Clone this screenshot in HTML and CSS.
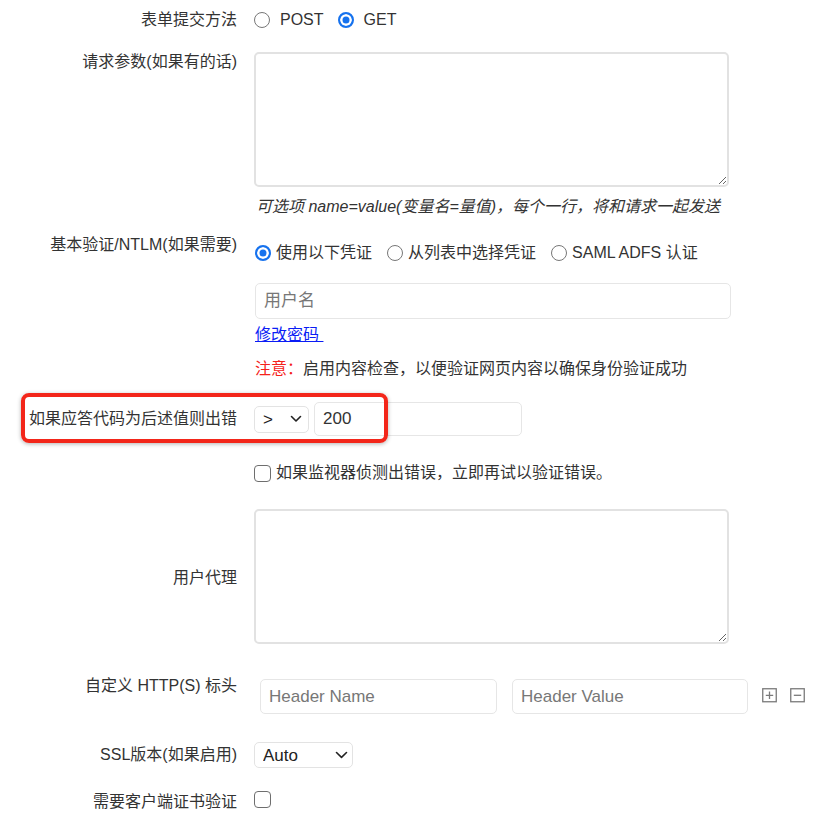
FILE: index.html
```html
<!DOCTYPE html>
<html lang="zh-CN">
<head>
<meta charset="utf-8">
<title>监视器设置</title>
<link rel="stylesheet" href="styles.css">
</head>
<body>
<form class="form">
  <div class="row r-method">
    <div class="label">表单提交方法</div>
    <div class="control radios wide-gap">
      <label class="opt"><input type="radio" name="method"><span>POST</span></label>
      <label class="opt"><input type="radio" name="method" checked><span>GET</span></label>
    </div>
  </div>

  <div class="row r-params">
    <div class="label">请求参数(如果有的话)</div>
    <div class="control">
      <textarea class="textarea"></textarea>
      <div class="help">可选项 name=value(变量名=量值)，每个一行，将和请求一起发送</div>
    </div>
  </div>

  <div class="row r-auth">
    <div class="label">基本验证/NTLM(如果需要)</div>
    <div class="control">
      <div class="radios narrow-gap auth-radios">
        <label class="opt"><input type="radio" name="auth" checked><span>使用以下凭证</span></label>
        <label class="opt"><input type="radio" name="auth"><span>从列表中选择凭证</span></label>
        <label class="opt"><input type="radio" name="auth"><span>SAML ADFS 认证</span></label>
      </div>
      <input class="input user" type="text" placeholder="用户名">
      <div class="link-line"><a href="#" class="link">修改密码 </a></div>
      <div class="note"><span class="warn">注意：</span>启用内容检查，以便验证网页内容以确保身份验证成功</div>
    </div>
  </div>

  <div class="row r-code">
    <div class="label">如果应答代码为后述值则出错</div>
    <div class="control inline">
      <div class="select-wrap op">
        <select class="select"><option>&gt;</option></select>
        <svg class="chev" width="12" height="8" viewBox="0 0 12 8"><path d="M1.5 1.5 L6 6 L10.5 1.5" fill="none" stroke="#222" stroke-width="1.6" stroke-linecap="round" stroke-linejoin="round"/></svg>
      </div>
      <input class="input code" type="text" value="200">
    </div>
    <div class="highlight"></div>
  </div>

  <div class="row r-retry">
    <div class="label"></div>
    <div class="control">
      <label class="opt check-opt"><input type="checkbox" class="checkbox"><span>如果监视器侦测出错误，立即再试以验证错误。</span></label>
    </div>
  </div>

  <div class="row r-agent">
    <div class="label">用户代理</div>
    <div class="control">
      <textarea class="textarea"></textarea>
    </div>
  </div>

  <div class="row r-headers">
    <div class="label">自定义 HTTP(S) 标头</div>
    <div class="control headers">
      <input class="input hname" type="text" placeholder="Header Name">
      <input class="input hvalue" type="text" placeholder="Header Value">
      <span class="icon-btn" title="添加">
        <svg width="15" height="15" viewBox="0 0 15 15"><rect x="0.75" y="0.75" width="13.5" height="13" fill="none" stroke="#7a7a7a" stroke-width="1.3"/><path d="M7.5 3.5 V11 M3.8 7.3 H11.2" stroke="#7a7a7a" stroke-width="1.3"/></svg>
      </span>
      <span class="icon-btn" title="删除">
        <svg width="15" height="15" viewBox="0 0 15 15"><rect x="0.75" y="0.75" width="13.5" height="13" fill="none" stroke="#7a7a7a" stroke-width="1.3"/><path d="M3.8 7.3 H11.2" stroke="#7a7a7a" stroke-width="1.3"/></svg>
      </span>
    </div>
  </div>

  <div class="row r-ssl">
    <div class="label">SSL版本(如果启用)</div>
    <div class="control">
      <div class="select-wrap ssl">
        <select class="select"><option>Auto</option></select>
        <svg class="chev" width="13" height="8" viewBox="0 0 13 8"><path d="M1.5 1.5 L6.5 6.3 L11.5 1.5" fill="none" stroke="#222" stroke-width="1.6" stroke-linecap="round" stroke-linejoin="round"/></svg>
      </div>
    </div>
  </div>

  <div class="row r-cert">
    <div class="label">需要客户端证书验证</div>
    <div class="control">
      <input type="checkbox" class="checkbox">
    </div>
  </div>
</form>
</body>
</html>
```

FILE: styles.css
```css
* { box-sizing: border-box; }

html, body {
  margin: 0;
  padding: 0;
  background: #ffffff;
}

body {
  font-family: "Liberation Sans", "Noto Sans CJK SC", sans-serif;
  font-size: 16px;
  line-height: 20px;
  color: #333333;
}

.form {
  padding-top: 10px;
}

.row {
  display: flex;
  align-items: flex-start;
  position: relative;
}

.label {
  width: 237px;
  flex: none;
  text-align: right;
  color: #333;
  white-space: nowrap;
}

.control {
  margin-left: 17px;
  flex: none;
}

/* radios */
.radios {
  display: flex;
  align-items: center;
  height: 20px;
}
.opt {
  display: inline-flex;
  align-items: center;
  white-space: nowrap;
}
.wide-gap .opt { margin-right: 14px; }
.wide-gap .opt input { margin-right: 10px; }
.narrow-gap .opt { margin-right: 15px; }
.narrow-gap .opt input { margin-right: 5px; }

input[type="radio"] {
  appearance: none;
  -webkit-appearance: none;
  width: 16px;
  height: 16px;
  margin: 0;
  border: 1px solid #777;
  border-radius: 50%;
  background: #fff;
  flex: none;
}
input[type="radio"]:checked {
  border: 2px solid #1672ee;
  background: #1672ee;
  box-shadow: inset 0 0 0 2.5px #fff;
}

.checkbox {
  appearance: none;
  -webkit-appearance: none;
  width: 17px;
  height: 17px;
  margin: 0;
  border: 1.5px solid #6e6e6e;
  border-radius: 4px;
  background: #fff;
  flex: none;
}

/* rows spacing */
.r-params { margin-top: 22px; }
.r-auth { margin-top: 18px; }
.r-code { margin-top: 23px; align-items: center; }
.r-retry { margin-top: 27px; }
.r-agent { margin-top: 26px; align-items: center; }
.r-agent .label { padding-top: 3px; }
.r-headers { margin-top: 32px; }
.r-ssl { margin-top: 28px; align-items: center; }
.r-cert { margin-top: 23px; align-items: center; }

/* textareas */
.textarea {
  display: block;
  width: 475px;
  height: 135px;
  margin: 0;
  border: 2px solid #e2e2e2;
  border-radius: 5px;
  background: #fff;
  font-family: inherit;
  font-size: 16px;
}

.help {
  margin-top: 10px;
  margin-left: 2px;
  font-style: italic;
  color: #333;
  white-space: nowrap;
}

/* auth */
.auth-radios {
  margin-top: 8px;
  margin-left: 1px;
}
.input {
  display: block;
  margin: 0;
  height: 35px;
  border: 1px solid #e6e6e6;
  border-radius: 5px;
  padding: 0 8px;
  font-family: inherit;
  font-size: 17px;
  color: #333;
  background: #fff;
}
.input::placeholder { color: #777; }

.user {
  margin-top: 20px;
  margin-left: 1px;
  width: 476px;
  height: 36px;
}
.link-line { margin-top: 6px; margin-left: 1px; }
.link {
  color: #0a1cf5;
  text-decoration: underline;
  white-space: pre;
}
.note {
  margin-top: 14px;
  margin-left: 1px;
  white-space: nowrap;
}
.warn { color: #f5221b; }

/* response code */
.inline {
  display: flex;
  align-items: center;
  gap: 5px;
}
.select-wrap {
  position: relative;
  display: inline-block;
}
.select {
  appearance: none;
  -webkit-appearance: none;
  display: block;
  margin: 0;
  height: 27px;
  border: 1px solid #e3e3e3;
  border-radius: 5px;
  background: #fff;
  padding: 0 0 0 8px;
  font-family: inherit;
  font-size: 17px;
  color: #222;
}
.op .select { width: 55px; }
.ssl .select { width: 99px; height: 26px; }
.chev {
  position: absolute;
  top: 50%;
  transform: translateY(-50%);
  pointer-events: none;
}
.op .chev { right: 7px; }
.ssl .chev { right: 5px; }

.code {
  width: 208px;
  height: 34px;
}

.highlight {
  position: absolute;
  left: 21px;
  top: -9px;
  width: 367px;
  height: 50px;
  border: 4px solid #f3261a;
  border-radius: 8px;
  box-shadow: 0 1px 4px rgba(0, 0, 0, 0.3);
  pointer-events: none;
}

/* retry */
.check-opt .checkbox { margin-right: 5px; }
.r-retry .control { display: flex; align-items: center; height: 20px; }

/* headers */
.headers {
  display: flex;
  align-items: center;
  padding-top: 3px;
}
.hname { width: 237px; margin-left: 6px; }
.hvalue { width: 236px; margin-left: 15px; }
.icon-btn {
  display: inline-flex;
  margin-left: 14px;
  margin-top: -2px;
}
.icon-btn + .icon-btn { margin-left: 13px; }
```
